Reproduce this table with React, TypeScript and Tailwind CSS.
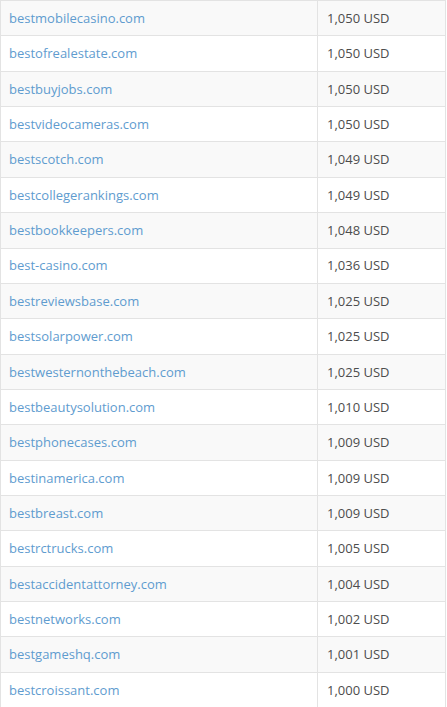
import React from "react";

const rows: [string, string][] = [
  ["bestmobilecasino.com", "1,050 USD"],
  ["bestofrealestate.com", "1,050 USD"],
  ["bestbuyjobs.com", "1,050 USD"],
  ["bestvideocameras.com", "1,050 USD"],
  ["bestscotch.com", "1,049 USD"],
  ["bestcollegerankings.com", "1,049 USD"],
  ["bestbookkeepers.com", "1,048 USD"],
  ["best-casino.com", "1,036 USD"],
  ["bestreviewsbase.com", "1,025 USD"],
  ["bestsolarpower.com", "1,025 USD"],
  ["bestwesternonthebeach.com", "1,025 USD"],
  ["bestbeautysolution.com", "1,010 USD"],
  ["bestphonecases.com", "1,009 USD"],
  ["bestinamerica.com", "1,009 USD"],
  ["bestbreast.com", "1,009 USD"],
  ["bestrctrucks.com", "1,005 USD"],
  ["bestaccidentattorney.com", "1,004 USD"],
  ["bestnetworks.com", "1,002 USD"],
  ["bestgameshq.com", "1,001 USD"],
  ["bestcroissant.com", "1,000 USD"],
];

export default function App() {
  return (
    <div
      className="w-[447px] h-[707px] overflow-hidden bg-white"
      style={{ fontFamily: '"Open Sans", sans-serif' }}
    >
      <div className="w-[446px] border-l border-r border-t border-[#e3e3e3] text-[13px]">
        {rows.map(([d, p], i) => (
          <div
            key={d}
            className={`flex border-b border-[#e3e3e3] h-[35.37px] ${i % 2 === 0 ? "bg-[#f9f9f9]" : "bg-white"}`}
          >
            <div className="w-[317px] border-r border-[#e3e3e3] pl-2 pt-px flex items-center text-[#5f9ccf]">
              {d}
            </div>
            <div className="flex-1 pl-[9px] pt-px flex items-center text-[#4d4d4d]">{p}</div>
          </div>
        ))}
      </div>
    </div>
  );
}
